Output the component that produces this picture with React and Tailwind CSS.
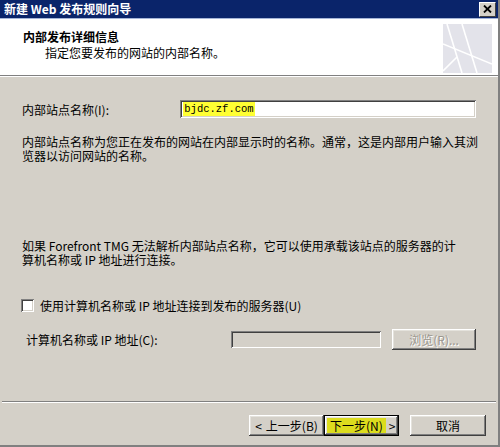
const raised =
  "shadow-[inset_-1px_-1px_#404040,inset_1px_1px_#ffffff,inset_-2px_-2px_#808080,inset_2px_2px_#e4e2dc]";
const sunken =
  "shadow-[inset_1px_1px_#808080,inset_-1px_-1px_#ffffff,inset_2px_2px_#404040,inset_-2px_-2px_#d4d0c8]";

const Logo = () => (
  <svg width="49" height="49" viewBox="0 0 49 49" className="block">
    <rect width="49" height="49" fill="#e3e3ea" />
    <g stroke="#ffffff" strokeWidth="1.6" fill="none">
      <path d="M4 0 L19 49" />
      <path d="M19 0 L34 49" />
      <path d="M0 20 L49 40" />
      <path d="M0 47 L14 33" />
    </g>
  </svg>
);

const CloseBox = () => (
  <div className="w-[17px] h-[15px] flex-none bg-[#d4d0c8] border-t border-l border-t-white border-l-white border-r border-b border-r-[#404040] border-b-[#404040] flex items-center justify-center">
    <svg width="9" height="8" viewBox="0 0 9 8" className="block">
      <path d="M1 0.5 L8 7.5 M8 0.5 L1 7.5" stroke="#000000" strokeWidth="1.8" />
    </svg>
  </div>
);

export default function App() {
  return (
    <div className="w-[500px] h-[447px] overflow-hidden bg-[#d4d0c8] text-[12px] leading-[13px] text-black font-['Noto_Sans_CJK_SC','Noto_Sans',sans-serif] flex flex-col border-r-2 border-b-2 border-r-[#808080] border-b-[#808080]">
      {/* title bar */}
      <div className="h-[19px] shrink-0 bg-[#0a246a] flex items-center justify-between pl-[4px] pr-[2px] border-b border-[#a6b6d8]">
        <span className="text-white font-bold leading-[14px] whitespace-nowrap">新建 Web 发布规则向导</span>
        <CloseBox />
      </div>

      {/* header */}
      <div className="h-[57px] shrink-0 bg-white flex justify-between border-b border-b-[#808080]">
        <div className="pl-[23px] pt-[11px] flex flex-col gap-[3px]">
          <span className="font-bold leading-[13px]">内部发布详细信息</span>
          <span className="pl-[22px] leading-[13px]">指定您要发布的网站的内部名称。</span>
        </div>
        <div className="pt-[5px] pr-[6px]">
          <Logo />
        </div>
      </div>
      <div className="h-px shrink-0 bg-white" />

      {/* body */}
      <div className="flex-1 flex flex-col pl-[22px] pr-[22px]">
        <div className="mt-[23px] flex items-center">
          <span className="w-[159px]">内部站点名称(I):</span>
          <div className={`w-[297px] h-[18px] bg-white flex items-center pl-[3px] ${sunken}`}>
            <span className="bg-[#ffff33] px-[1px] font-['Liberation_Mono',monospace] text-[10.5px] leading-[14px]">bjdc.zf.com</span>
          </div>
        </div>

        <p className="mt-[17px] w-[460px] leading-[14px]">
          内部站点名称为您正在发布的网站在内部显示时的名称。通常，这是内部用户输入其浏
          <br />
          览器以访问网站的名称。
        </p>

        <p className="mt-[76px] w-[460px] leading-[14px]">
          如果 Forefront TMG 无法解析内部站点名称，它可以使用承载该站点的服务器的计
          <br />
          算机名称或 IP 地址进行连接。
        </p>

        <label className="mt-[32px] flex items-center gap-[6px] -ml-[1px]">
          <span className={`w-[13px] h-[13px] bg-white ${sunken}`} />
          <span>使用计算机名称或 IP 地址连接到发布的服务器(U)</span>
        </label>

        <div className="mt-[17px] flex items-center pl-[4px]">
          <span className="w-[205px]">计算机名称或 IP 地址(C):</span>
          <div className={`w-[151px] h-[17px] bg-[#d4d0c8] ${sunken}`} />
          <button
            disabled
            className={`ml-[11px] w-[84px] h-[21px] flex items-center justify-center text-[#9a968e] [text-shadow:1px_1px_#ffffff] ${raised}`}
          >
            浏览(R)...
          </button>
        </div>
      </div>

      {/* footer */}
      <div className="shrink-0 border-t border-t-[#808080] mx-[2px]">
        <div className="h-px bg-white" />
        <div className="h-[42px] flex items-start justify-end pt-[12px] pr-[10px]">
          <button className={`w-[75px] h-[21px] flex items-center justify-center gap-[4px] whitespace-nowrap ${raised}`}>
            <span>&lt;</span>
            <span>上一步(B)</span>
          </button>
          <button className="w-[75px] h-[21px] border border-black flex items-center whitespace-nowrap">
            <span className={`w-full h-full flex items-center ${raised} pl-[2px]`}>
              <span className="bg-[#dcdc1e] h-[15px] flex items-center px-[3px] whitespace-nowrap">下一步(N)</span>
              <span className="ml-[3px]">&gt;</span>
            </span>
          </button>
          <button className={`ml-[11px] w-[76px] h-[21px] flex items-center justify-center ${raised}`}>
            取消
          </button>
        </div>
      </div>
    </div>
  );
}
